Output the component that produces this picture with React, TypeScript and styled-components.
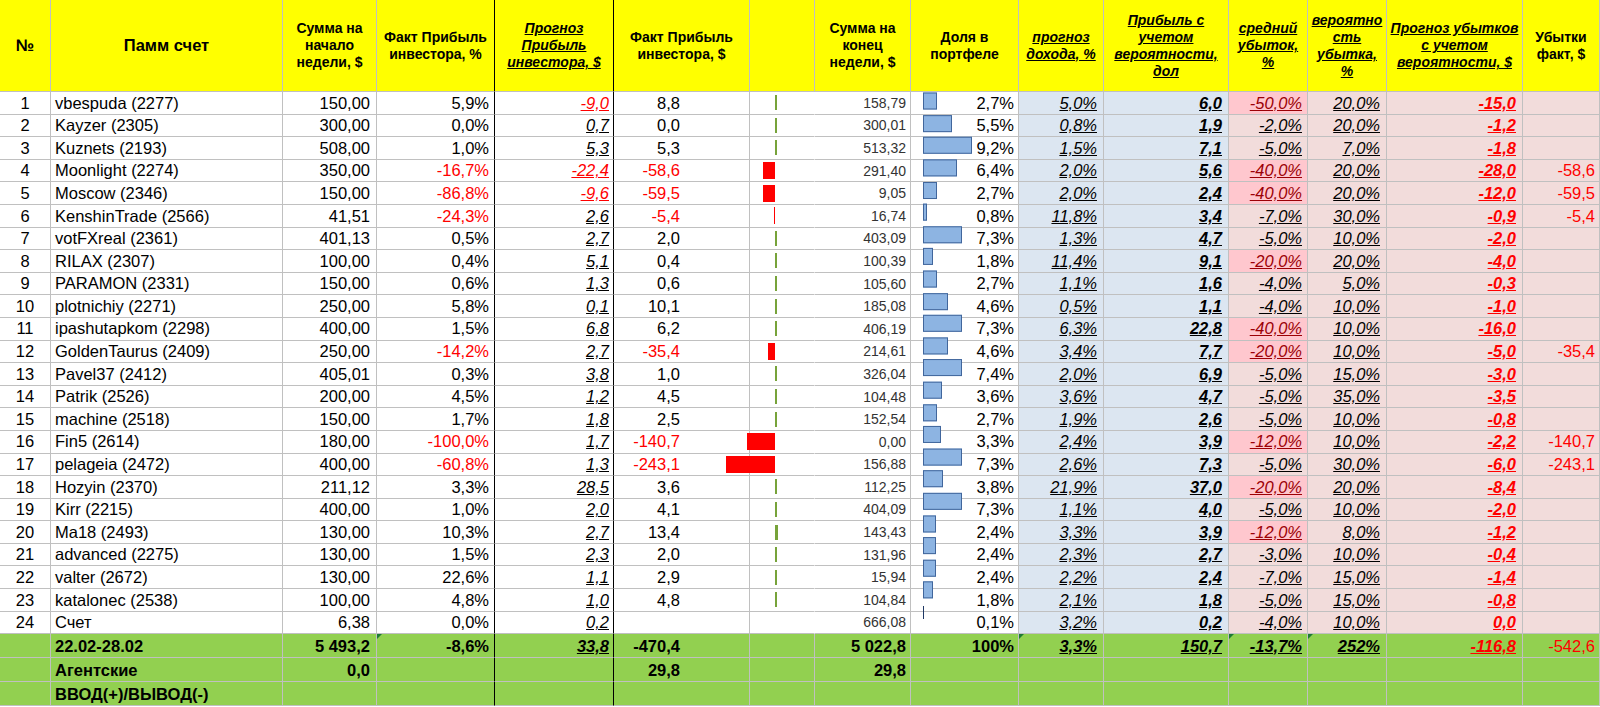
import React from "react";
import styled, { createGlobalStyle, css } from "styled-components";

const GRID = "#c0c0c0";
const RED = "#ff0000";
const BLUE_BG = "#dce6f1";
const PINK_BG = "#f2dcdb";
const ALERT_BG = "#ffc7ce";
const ALERT_TX = "#9c0006";
const GREEN_BG = "#92d050";

const COLS = [51, 232, 94, 118, 119, 136, 65, 96, 108, 85, 125, 79, 79, 136, 77];

// n, name, start, pct, prog, fact, end, share, inc, profit, avgLoss, prob, lossProg, lossFact
const ROWS: string[][] = [
  ["1", "vbespuda (2277)", "150,00", "5,9%", "-9,0", "8,8", "158,79", "2,7%", "5,0%", "6,0", "-50,0%", "20,0%", "-15,0", ""],
  ["2", "Kayzer (2305)", "300,00", "0,0%", "0,7", "0,0", "300,01", "5,5%", "0,8%", "1,9", "-2,0%", "20,0%", "-1,2", ""],
  ["3", "Kuznets (2193)", "508,00", "1,0%", "5,3", "5,3", "513,32", "9,2%", "1,5%", "7,1", "-5,0%", "7,0%", "-1,8", ""],
  ["4", "Moonlight (2274)", "350,00", "-16,7%", "-22,4", "-58,6", "291,40", "6,4%", "2,0%", "5,6", "-40,0%", "20,0%", "-28,0", "-58,6"],
  ["5", "Moscow (2346)", "150,00", "-86,8%", "-9,6", "-59,5", "9,05", "2,7%", "2,0%", "2,4", "-40,0%", "20,0%", "-12,0", "-59,5"],
  ["6", "KenshinTrade (2566)", "41,51", "-24,3%", "2,6", "-5,4", "16,74", "0,8%", "11,8%", "3,4", "-7,0%", "30,0%", "-0,9", "-5,4"],
  ["7", "votFXreal (2361)", "401,13", "0,5%", "2,7", "2,0", "403,09", "7,3%", "1,3%", "4,7", "-5,0%", "10,0%", "-2,0", ""],
  ["8", "RILAX (2307)", "100,00", "0,4%", "5,1", "0,4", "100,39", "1,8%", "11,4%", "9,1", "-20,0%", "20,0%", "-4,0", ""],
  ["9", "PARAMON (2331)", "150,00", "0,6%", "1,3", "0,6", "105,60", "2,7%", "1,1%", "1,6", "-4,0%", "5,0%", "-0,3", ""],
  ["10", "plotnichiy (2271)", "250,00", "5,8%", "0,1", "10,1", "185,08", "4,6%", "0,5%", "1,1", "-4,0%", "10,0%", "-1,0", ""],
  ["11", "ipashutapkom (2298)", "400,00", "1,5%", "6,8", "6,2", "406,19", "7,3%", "6,3%", "22,8", "-40,0%", "10,0%", "-16,0", ""],
  ["12", "GoldenTaurus (2409)", "250,00", "-14,2%", "2,7", "-35,4", "214,61", "4,6%", "3,4%", "7,7", "-20,0%", "10,0%", "-5,0", "-35,4"],
  ["13", "Pavel37 (2412)", "405,01", "0,3%", "3,8", "1,0", "326,04", "7,4%", "2,0%", "6,9", "-5,0%", "15,0%", "-3,0", ""],
  ["14", "Patrik (2526)", "200,00", "4,5%", "1,2", "4,5", "104,48", "3,6%", "3,6%", "4,7", "-5,0%", "35,0%", "-3,5", ""],
  ["15", "machine (2518)", "150,00", "1,7%", "1,8", "2,5", "152,54", "2,7%", "1,9%", "2,6", "-5,0%", "10,0%", "-0,8", ""],
  ["16", "Fin5 (2614)", "180,00", "-100,0%", "1,7", "-140,7", "0,00", "3,3%", "2,4%", "3,9", "-12,0%", "10,0%", "-2,2", "-140,7"],
  ["17", "pelageia (2472)", "400,00", "-60,8%", "1,3", "-243,1", "156,88", "7,3%", "2,6%", "7,3", "-5,0%", "30,0%", "-6,0", "-243,1"],
  ["18", "Hozyin (2370)", "211,12", "3,3%", "28,5", "3,6", "112,25", "3,8%", "21,9%", "37,0", "-20,0%", "20,0%", "-8,4", ""],
  ["19", "Kirr (2215)", "400,00", "1,0%", "2,0", "4,1", "404,09", "7,3%", "1,1%", "4,0", "-5,0%", "10,0%", "-2,0", ""],
  ["20", "Ma18 (2493)", "130,00", "10,3%", "2,7", "13,4", "143,43", "2,4%", "3,3%", "3,9", "-12,0%", "8,0%", "-1,2", ""],
  ["21", "advanced (2275)", "130,00", "1,5%", "2,3", "2,0", "131,96", "2,4%", "2,3%", "2,7", "-3,0%", "10,0%", "-0,4", ""],
  ["22", "valter (2672)", "130,00", "22,6%", "1,1", "2,9", "15,94", "2,4%", "2,2%", "2,4", "-7,0%", "15,0%", "-1,4", ""],
  ["23", "katalonec (2538)", "100,00", "4,8%", "1,0", "4,8", "104,84", "1,8%", "2,1%", "1,8", "-5,0%", "15,0%", "-0,8", ""],
  ["24", "Счет", "6,38", "0,0%", "0,2", "", "666,08", "0,1%", "3,2%", "0,2", "-4,0%", "10,0%", "0,0", ""],
];

const num = (s: string) => parseFloat(s.replace(/\s/g, "").replace(",", "."));
const neg = (s: string) => s.startsWith("-");

const Global = createGlobalStyle`
  html, body { margin: 0; padding: 0; background: #fff; overflow: hidden; }
`;

const Sheet = styled.table`
  table-layout: fixed;
  border-collapse: separate;
  border-spacing: 0;
  width: 1600px;
  font-family: "Liberation Sans", Arial, sans-serif;
  color: #000;
`;

const HeadRow = styled.tr`
  height: 92px;
`;

const BodyRow = styled.tr`
  height: 22.6px;
`;

const FootRow = styled.tr`
  height: 24px;
`;

const HeadCell = styled.th<{ $big?: boolean; $em?: boolean; $edge?: boolean }>`
  background: #ffff00;
  border-right: 1px solid ${(p) => (p.$edge ? "#000" : GRID)};
  border-bottom: 1px solid ${GRID};
  padding: 0 1px;
  text-align: center;
  vertical-align: middle;
  white-space: nowrap;
  font-weight: 700;
  font-size: ${(p) => (p.$big ? 16.5 : 14)}px;
  line-height: 17px;
  ${(p) =>
    p.$em &&
    css`
      font-style: italic;
      text-decoration: underline;
    `}
`;

type CellProps = {
  $align?: "left" | "center" | "right";
  $pad?: number;
  $bg?: string;
  $tone?: string;
  $size?: number;
  $em?: boolean;
  $bold?: boolean;
  $edge?: boolean;
  $open?: boolean;
  $flag?: boolean;
};

const Cell = styled.td<CellProps>`
  position: relative;
  background: ${(p) => p.$bg || "#fff"};
  color: ${(p) => p.$tone || "#000"};
  border-right: 1px solid ${(p) => (p.$edge ? "#000" : p.$open ? "transparent" : GRID)};
  border-bottom: 1px solid ${GRID};
  padding: 0;
  padding-left: ${(p) => (p.$align === "left" ? p.$pad ?? 4 : 0)}px;
  padding-right: ${(p) => (p.$align === "right" ? p.$pad ?? 5 : 0)}px;
  text-align: ${(p) => p.$align || "right"};
  vertical-align: middle;
  font-size: ${(p) => p.$size || 16.5}px;
  line-height: 1;
  font-weight: ${(p) => (p.$bold ? 700 : 400)};
  white-space: nowrap;
  ${(p) =>
    p.$em &&
    css`
      font-style: italic;
      text-decoration: underline;
    `}
  ${(p) =>
    p.$flag &&
    css`
      &::before {
        content: "";
        position: absolute;
        left: 0;
        top: 0;
        border-top: 5px solid #1e7b34;
        border-right: 5px solid transparent;
      }
    `}
`;

const Chart = styled.div`
  display: flex;
  align-items: center;
`;

const NegSide = styled.div`
  flex: none;
  width: 25px;
  height: 17px;
  display: flex;
  justify-content: flex-end;
`;

const LossBar = styled.div`
  flex: none;
  height: 17px;
  background: #ff0000;
`;

const GainBar = styled.div`
  flex: none;
  height: 15px;
  background: #77a33a;
`;

const Share = styled.div`
  display: flex;
  align-items: center;
  justify-content: space-between;
  padding: 0 4px 0 12px;
`;

const ShareBar = styled.div<{ $thin?: boolean }>`
  flex: none;
  box-sizing: border-box;
  height: ${(p) => (p.$thin ? 13 : 17)}px;
  background: ${(p) => (p.$thin ? "#1f3864" : "#8db4e2")};
  border: ${(p) => (p.$thin ? "none" : "1px solid #41669c")};
`;

function FactChart({ value }: { value: string }) {
  if (!value) return null;
  const v = num(value);
  const w = Math.abs(v) * 0.2;
  return (
    <Chart>
      <NegSide>{v < 0 && <LossBar style={{ width: Math.max(1.5, w) }} />}</NegSide>
      {v >= 0 && <GainBar style={{ width: Math.max(2, w) }} />}
    </Chart>
  );
}

function ShareCell({ value, index }: { value: string; index: number }) {
  const w = num(value) * 5.33;
  const thin = w < 3;
  const shift = -1.5 - index * 0.37;
  return (
    <Share>
      <ShareBar $thin={thin} style={{ width: thin ? 1 : w, transform: `translateY(${shift}px)` }} />
      <span>{value}</span>
    </Share>
  );
}

function Header() {
  return (
    <HeadRow>
      <HeadCell $big>№</HeadCell>
      <HeadCell $big>Памм счет</HeadCell>
      <HeadCell>
        Сумма на
        <br />
        начало
        <br />
        недели, $
      </HeadCell>
      <HeadCell $edge>
        Факт Прибыль
        <br />
        инвестора, %
      </HeadCell>
      <HeadCell $edge $em>
        Прогноз
        <br />
        Прибыль
        <br />
        инвестора, $
      </HeadCell>
      <HeadCell>
        Факт Прибыль
        <br />
        инвестора, $
      </HeadCell>
      <HeadCell />
      <HeadCell>
        Сумма на
        <br />
        конец
        <br />
        недели, $
      </HeadCell>
      <HeadCell>
        Доля в
        <br />
        портфеле
      </HeadCell>
      <HeadCell $em>
        прогноз
        <br />
        дохода, %
      </HeadCell>
      <HeadCell $em>
        Прибыль с
        <br />
        учетом
        <br />
        вероятности,
        <br />
        дол
      </HeadCell>
      <HeadCell $em>
        средний
        <br />
        убыток,
        <br />%
      </HeadCell>
      <HeadCell $em>
        вероятно
        <br />
        сть
        <br />
        убытка,
        <br />%
      </HeadCell>
      <HeadCell $em>
        Прогноз убытков
        <br />
        с учетом
        <br />
        вероятности, $
      </HeadCell>
      <HeadCell>
        Убытки
        <br />
        факт, $
      </HeadCell>
    </HeadRow>
  );
}

function DataRow({ r, index }: { r: string[]; index: number }) {
  const alert = num(r[10]) <= -10;
  return (
    <BodyRow>
      <Cell $align="center">{r[0]}</Cell>
      <Cell $align="left">{r[1]}</Cell>
      <Cell $align="right" $pad={6}>{r[2]}</Cell>
      <Cell $align="right" $edge $tone={neg(r[3]) ? RED : undefined}>
        {r[3]}
      </Cell>
      <Cell $align="right" $pad={4} $edge $em $tone={neg(r[4]) ? RED : undefined}>
        {r[4]}
      </Cell>
      <Cell $align="right" $pad={69} $tone={neg(r[5]) ? RED : undefined}>
        {r[5]}
      </Cell>
      <Cell $align="left" $pad={0} $open>
        <FactChart value={r[5]} />
      </Cell>
      <Cell $align="right" $pad={4} $size={14} $tone="#333">
        {r[6]}
      </Cell>
      <Cell $align="left" $pad={0}>
        <ShareCell value={r[7]} index={index} />
      </Cell>
      <Cell $align="right" $pad={6} $bg={BLUE_BG} $em>
        {r[8]}
      </Cell>
      <Cell $align="right" $pad={6} $bg={BLUE_BG} $em $bold>
        {r[9]}
      </Cell>
      <Cell $align="right" $pad={5} $bg={alert ? ALERT_BG : PINK_BG} $tone={alert ? ALERT_TX : undefined} $em>
        {r[10]}
      </Cell>
      <Cell $align="right" $pad={6} $bg={PINK_BG} $em>
        {r[11]}
      </Cell>
      <Cell $align="right" $pad={6} $bg={PINK_BG} $tone={RED} $em $bold>
        {r[12]}
      </Cell>
      <Cell $align="right" $pad={4} $bg={PINK_BG} $tone={RED}>
        {r[13]}
      </Cell>
    </BodyRow>
  );
}

function Footer() {
  return (
    <>
      <FootRow>
        <Cell $bg={GREEN_BG} />
        <Cell $align="left" $bg={GREEN_BG} $bold>
          22.02-28.02
        </Cell>
        <Cell $align="right" $pad={6} $bg={GREEN_BG} $bold>
          5 493,2
        </Cell>
        <Cell $align="right" $bg={GREEN_BG} $bold $edge $flag>
          -8,6%
        </Cell>
        <Cell $align="right" $pad={4} $bg={GREEN_BG} $bold $em $edge>
          33,8
        </Cell>
        <Cell $align="right" $pad={69} $bg={GREEN_BG} $bold>
          -470,4
        </Cell>
        <Cell $bg={GREEN_BG} />
        <Cell $align="right" $pad={4} $bg={GREEN_BG} $bold>
          5 022,8
        </Cell>
        <Cell $align="right" $pad={4} $bg={GREEN_BG} $bold>
          100%
        </Cell>
        <Cell $align="right" $pad={6} $bg={GREEN_BG} $bold $em $flag>
          3,3%
        </Cell>
        <Cell $align="right" $pad={6} $bg={GREEN_BG} $bold $em>
          150,7
        </Cell>
        <Cell $align="right" $pad={5} $bg={GREEN_BG} $bold $em $flag>
          -13,7%
        </Cell>
        <Cell $align="right" $pad={6} $bg={GREEN_BG} $bold $em $flag>
          252%
        </Cell>
        <Cell $align="right" $pad={6} $bg={GREEN_BG} $tone={RED} $bold $em>
          -116,8
        </Cell>
        <Cell $align="right" $pad={4} $bg={GREEN_BG} $tone={RED}>
          -542,6
        </Cell>
      </FootRow>
      <FootRow>
        <Cell $bg={GREEN_BG} />
        <Cell $align="left" $bg={GREEN_BG} $bold>
          Агентские
        </Cell>
        <Cell $align="right" $pad={6} $bg={GREEN_BG} $bold>
          0,0
        </Cell>
        <Cell $bg={GREEN_BG} $edge />
        <Cell $bg={GREEN_BG} $edge />
        <Cell $align="right" $pad={69} $bg={GREEN_BG} $bold>
          29,8
        </Cell>
        <Cell $bg={GREEN_BG} />
        <Cell $align="right" $pad={4} $bg={GREEN_BG} $bold>
          29,8
        </Cell>
        {COLS.slice(8).map((_, i) => (
          <Cell key={i} $bg={GREEN_BG} />
        ))}
      </FootRow>
      <FootRow>
        <Cell $bg={GREEN_BG} />
        <Cell $align="left" $bg={GREEN_BG} $bold>
          ВВОД(+)/ВЫВОД(-)
        </Cell>
        <Cell $bg={GREEN_BG} />
        <Cell $bg={GREEN_BG} $edge />
        <Cell $bg={GREEN_BG} $edge />
        {COLS.slice(5).map((_, i) => (
          <Cell key={i} $bg={GREEN_BG} />
        ))}
      </FootRow>
    </>
  );
}

export default function App() {
  return (
    <>
      <Global />
      <Sheet>
        <colgroup>
          {COLS.map((w, i) => (
            <col key={i} style={{ width: w }} />
          ))}
        </colgroup>
        <thead>
          <Header />
        </thead>
        <tbody>
          {ROWS.map((r, i) => (
            <DataRow key={r[0]} r={r} index={i} />
          ))}
          <Footer />
        </tbody>
      </Sheet>
    </>
  );
}
